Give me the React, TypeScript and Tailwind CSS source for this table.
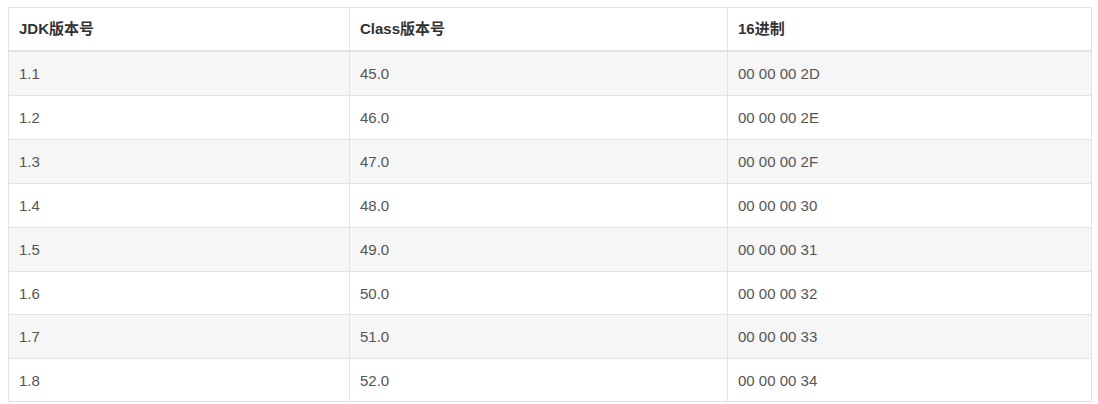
import React from "react";

const rows = [
  ["1.1", "45.0", "00 00 00 2D"],
  ["1.2", "46.0", "00 00 00 2E"],
  ["1.3", "47.0", "00 00 00 2F"],
  ["1.4", "48.0", "00 00 00 30"],
  ["1.5", "49.0", "00 00 00 31"],
  ["1.6", "50.0", "00 00 00 32"],
  ["1.7", "51.0", "00 00 00 33"],
  ["1.8", "52.0", "00 00 00 34"],
];

export default function App() {
  return (
    <div
      className="bg-white w-[1098px] h-[404px] pt-[7px] pl-[8px]"
      style={{ fontFamily: '"Liberation Sans", Arial, "Noto Sans CJK SC", sans-serif' }}
    >
      <table className="w-[1083px] border-collapse border border-[#e2e2e2] table-fixed text-[15px]">
        <colgroup>
          <col className="w-[341px]" />
          <col className="w-[378px]" />
          <col className="w-[364px]" />
        </colgroup>
        <thead>
          <tr className="bg-white">
            {["JDK版本号", "Class版本号", "16进制"].map((h) => (
              <th
                key={h}
                className="text-left font-bold text-[#333] px-[10px] py-[11px] leading-[20px] border border-[#e2e2e2] border-b-2 border-b-[#e2e2e2]"
              >
                {h}
              </th>
            ))}
          </tr>
        </thead>
        <tbody>
          {rows.map((r, i) => {
            const short = i === 5 || i === 7;
            return (
              <tr key={r[0]} className={i % 2 === 0 ? "bg-[#f6f6f6]" : "bg-white"}>
                {r.map((c, j) => (
                  <td
                    key={j}
                    className={
                      (short ? "py-[11.5px] leading-[19px] " : "py-[11.75px] leading-[19.5px] ") +
                      "px-[10px] text-[#555] border border-[#e2e2e2]"
                    }
                  >
                    {c}
                  </td>
                ))}
              </tr>
            );
          })}
        </tbody>
      </table>
    </div>
  );
}
